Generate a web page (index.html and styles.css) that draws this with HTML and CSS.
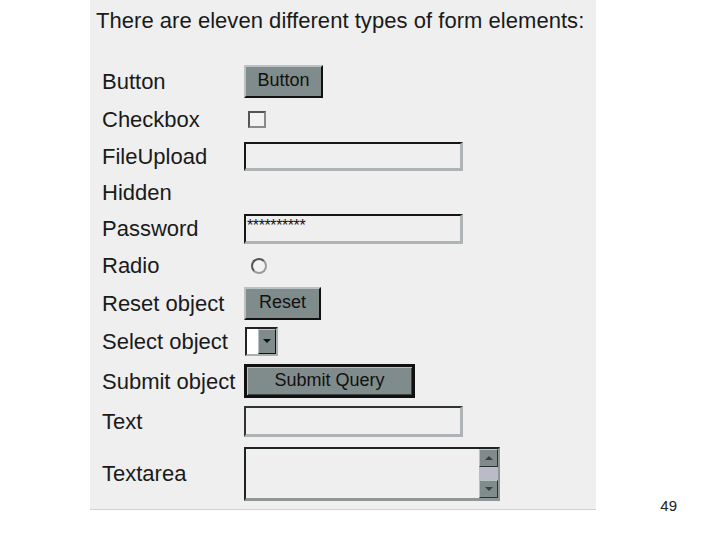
FILE: index.html
```html
<!DOCTYPE html>
<html>
<head>
<meta charset="utf-8">
<link rel="stylesheet" href="styles.css">
</head>
<body>
<div class="page">
  <div class="panel">
    <p class="heading">There are eleven different types of form elements:</p>
    <div class="form">
      <span class="label">Button</span>
      <div class="cell"><button class="btn btn-button" type="button">Button</button></div>

      <span class="label">Checkbox</span>
      <div class="cell"><input class="check" type="checkbox"></div>

      <span class="label">FileUpload</span>
      <div class="cell"><input class="field" type="text"></div>

      <span class="label">Hidden</span>
      <div class="cell"></div>

      <span class="label">Password</span>
      <div class="cell"><input class="field pw" type="text" value="**********" readonly></div>

      <span class="label">Radio</span>
      <div class="cell"><input class="radio" type="radio"></div>

      <span class="label">Reset object</span>
      <div class="cell"><button class="btn btn-reset" type="reset">Reset</button></div>

      <span class="label">Select object</span>
      <div class="cell">
        <div class="select">
          <span class="select-value"></span>
          <span class="select-arrow"><span class="tri-down"></span></span>
        </div>
      </div>

      <span class="label">Submit object</span>
      <div class="cell"><button class="btn btn-submit" type="submit">Submit Query</button></div>

      <span class="label">Text</span>
      <div class="cell"><input class="field text" type="text"></div>

      <span class="label">Textarea</span>
      <div class="cell">
        <div class="textarea">
          <textarea class="ta-input"></textarea>
          <div class="scrollbar">
            <span class="sb-btn"><span class="tri-up-s"></span></span>
            <span class="sb-track"></span>
            <span class="sb-btn"><span class="tri-down-s"></span></span>
          </div>
        </div>
      </div>
    </div>
  </div>
  <div class="pagenum">49</div>
</div>
</body>
</html>
```
FILE: styles.css
```css
html, body {
  margin: 0;
  padding: 0;
  background: #ffffff;
}

.page {
  width: 720px;
  height: 540px;
  display: flex;
  align-items: flex-start;
  font-family: "Liberation Sans", Arial, sans-serif;
  color: #1a1a1a;
}

.panel {
  margin-left: 90px;
  width: 500px;
  height: 509px;
  padding-left: 6px;
  background: #efefef;
  border-bottom: 1px solid #c9d3da;
}

.heading {
  margin: 0;
  padding-top: 8px;
  font-size: 22px;
  line-height: 25px;
  letter-spacing: 0.04px;
  color: #1a1a1a;
}

.form {
  margin-top: 30px;
  padding-left: 6px;
  display: grid;
  grid-template-columns: 142px auto;
  grid-template-rows: 37px 38px 36px 36px 37px 37px 38px 39px 40px 40px 64px;
}

.label {
  font-size: 22px;
  line-height: 25px;
  align-self: center;
  white-space: nowrap;
  color: #1a1a1a;
}

.cell {
  display: flex;
  align-items: center;
}

/* buttons */
.btn {
  -webkit-appearance: none;
  appearance: none;
  margin: 0;
  padding: 0 0 2px 0;
  font-family: "Liberation Sans", Arial, sans-serif;
  font-size: 18px;
  color: #111;
  background: #808c8c;
  border-style: solid;
  border-width: 2px;
  border-color: #b9c2c2 #111 #111 #b9c2c2;
  display: flex;
  align-items: center;
  justify-content: center;
}

.btn-button {
  width: 79px;
  height: 33px;
}

.btn-reset {
  width: 77px;
  height: 33px;
}

.btn-submit {
  width: 171px;
  height: 34px;
  border: 3px solid #111;
  box-shadow: inset 1px 1px 0 #b9c2c2, inset -1px -1px 0 #3c4444;
}

/* checkbox */
.check {
  -webkit-appearance: none;
  appearance: none;
  margin: 0 0 0 4px;
  width: 18px;
  height: 17px;
  box-sizing: border-box;
  background: #f2f2f2;
  border: 2px solid;
  border-color: #555 #8a8a8a #8a8a8a #555;
}

/* radio */
.radio {
  -webkit-appearance: none;
  appearance: none;
  margin: 0 0 0 7px;
  width: 16px;
  height: 16px;
  box-sizing: border-box;
  border-radius: 50%;
  background: #f2f2f2;
  border: 2px solid;
  border-color: #555 #9a9a9a #9a9a9a #555;
}

/* text fields */
.field {
  -webkit-appearance: none;
  appearance: none;
  margin: 0;
  width: 219px;
  height: 29px;
  box-sizing: border-box;
  padding: 0 1px;
  background: #efefef;
  border-style: solid;
  border-width: 2px 3px 3px 2px;
  border-color: #161616 #aeb3b6 #aeb3b6 #161616;
  font-family: "Liberation Sans", Arial, sans-serif;
  font-size: 16px;
  color: #111;
  outline: none;
}

.field.pw {
  height: 30px;
  letter-spacing: -0.4px;
  padding-bottom: 4px;
}

.field.text {
  height: 31px;
  border-top-color: #2e3434;
  border-left-color: #2e3434;
}

/* select */
.select {
  display: flex;
  width: 33px;
  height: 29px;
  box-sizing: border-box;
  border-style: solid;
  border-width: 2px;
  border-color: #222 #a9aeae #a9aeae #222;
  margin-left: 1px;
}

.select-value {
  width: 11px;
  background: #ffffff;
}

.select-arrow {
  flex: 1;
  background: #808c8c;
  border-style: solid;
  border-width: 1px;
  border-color: #b9c2c2 #111 #111 #b9c2c2;
  display: flex;
  align-items: center;
  justify-content: center;
}

.tri-down {
  width: 0;
  height: 0;
  border-left: 4px solid transparent;
  border-right: 4px solid transparent;
  border-top: 4px solid #111;
  margin-bottom: 2px;
}

/* textarea */
.textarea {
  display: flex;
  width: 256px;
  height: 54px;
  box-sizing: border-box;
  border-style: solid;
  border-width: 2px 2px 3px 2px;
  border-color: #1e2424 #8f9696 #8f9696 #1e2424;
  background: #efefef;
  margin-top: 2px;
}

.ta-input {
  flex: 1;
  margin: 0;
  padding: 0;
  border: none;
  background: #efefef;
  resize: none;
  outline: none;
}

.scrollbar {
  width: 19px;
  display: flex;
  flex-direction: column;
  background: #b9bcc6;
}

.sb-btn {
  height: 18px;
  box-sizing: border-box;
  background: #808c8c;
  border-style: solid;
  border-width: 1px;
  border-color: #b9c2c2 #2a3030 #2a3030 #b9c2c2;
  display: flex;
  align-items: center;
  justify-content: center;
}

.sb-track {
  flex: 1;
}

.tri-up-s {
  width: 0;
  height: 0;
  border-left: 4px solid transparent;
  border-right: 4px solid transparent;
  border-bottom: 4px solid #3a4040;
}

.tri-down-s {
  width: 0;
  height: 0;
  border-left: 4px solid transparent;
  border-right: 4px solid transparent;
  border-top: 4px solid #3a4040;
}

/* page number */
.pagenum {
  margin-left: auto;
  margin-right: 43px;
  margin-top: 497px;
  font-size: 15px;
  line-height: 17px;
  color: #222;
}
```
